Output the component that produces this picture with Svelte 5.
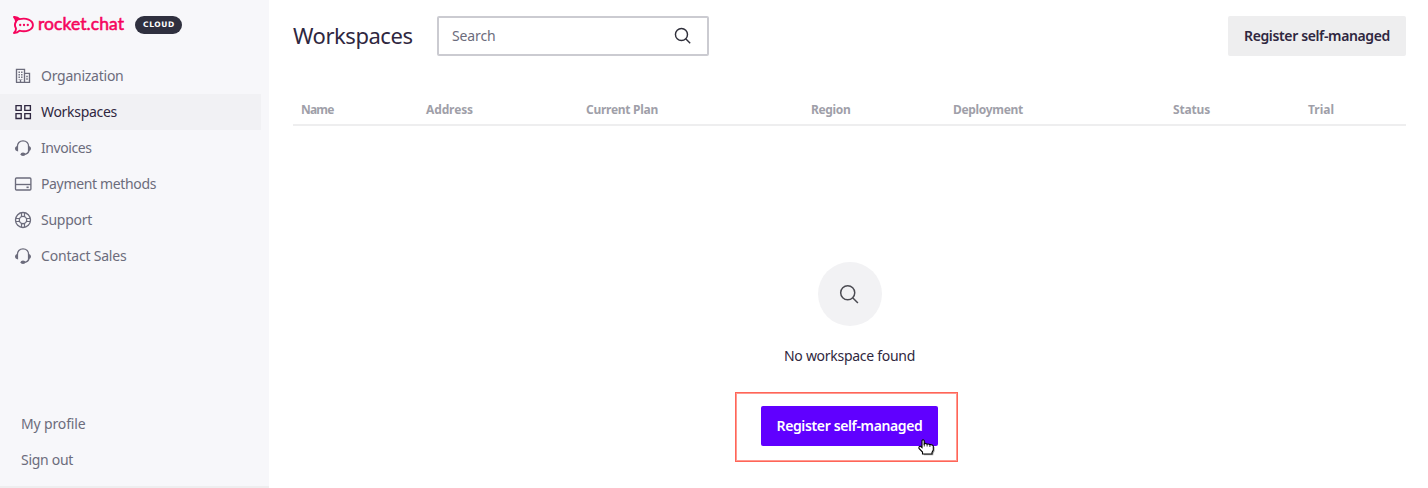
<script>
  const nav = [
    { label: 'Organization', icon: 'org', w: 82.5 },
    { label: 'Workspaces', icon: 'grid', w: 76, active: true },
    { label: 'Invoices', icon: 'headset', w: 50.5 },
    { label: 'Payment methods', icon: 'card', w: 115 },
    { label: 'Support', icon: 'buoy', w: 51 },
    { label: 'Contact Sales', icon: 'headset', w: 85.5 }
  ];
  const columns = [
    { label: 'Name', w: 32.5 },
    { label: 'Address', w: 47 },
    { label: 'Current Plan', w: 72 },
    { label: 'Region', w: 39.5 },
    { label: 'Deployment', w: 70 },
    { label: 'Status', w: 37 },
    { label: 'Trial', w: 26 }
  ];

  // Tracks a label so that it takes the given width in pixels.
  function fit(node, width) {
    const natural = node.getBoundingClientRect().width;
    node.style.letterSpacing = (width - natural) / node.textContent.length + 'px';
  }
</script>

{#snippet label(text, w)}<span class="label" use:fit={w}>{text}</span>{/snippet}

{#snippet magnifier(size, weight)}
  <svg width={size} height={size} viewBox="0 0 20 20" fill="none" stroke="currentColor" stroke-width={weight}>
    <circle cx="8.3" cy="8.3" r="6.7" /><path d="M13 13l5 5" />
  </svg>
{/snippet}

<div class="app">
  <aside>
    <div class="brand">
      <svg width="22" height="20" viewBox="0 0 22 20" fill="none" stroke="#f5055c" stroke-linejoin="round">
        <path stroke-width="1.9" d="M1 2C3.600 1.800 5.400 2.800 6.600 4.200C12.800 2.400 19.900 5 19.900 10S12.800 17.400 6.600 15.700C5.200 17.300 3.500 18 1 18C2.700 16.300 3.200 14.800 2.900 13.200C1.700 11.200 1.700 8.700 2.900 6.900C3.200 5.200 2.500 3.600 1 2Z" />
        <path fill="#f5055c" stroke="none" d="M1 2C4 1.800 5.400 2.800 6.600 4.200L3 7.500Z" />
        <g fill="#f5055c" stroke="none"><circle cx="7.200" cy="10" r="1.150" /><circle cx="11" cy="10" r="1.150" /><circle cx="14.800" cy="10" r="1.150" /></g>
      </svg>
      <div class="wordmark">{@render label('rocket.chat', 86)}</div>
      <div class="badge">{@render label('CLOUD', 32)}</div>
    </div>
    <nav>
      {#each nav as item}
        <a class:active={item.active}>
          <svg width="18" height="18" viewBox="0 0 18 18" fill="none" stroke="currentColor" stroke-width="1.35">
            {#if item.icon === 'org'}
              <path d="M2.500 15.400V2.300h8v13M10.500 6.400h5v9H2" />
              <path d="M5.200 4.500v8M7.800 4.500v8" stroke-width="1.400" stroke-dasharray="1.400 1.100" />
              <path d="M13 8.700v4.500" stroke-width="1.500" stroke-dasharray="1.500 1.100" />
              <path d="M6.500 15v-2.500" />
            {:else if item.icon === 'grid'}
              <path d="M2 2.600h5.200v4.800H2zM10.800 2.600h5.600v4.800h-5.600zM2 10.600h5.200v4.900H2zM10.800 10.600h5.600v4.900h-5.600z" />
            {:else if item.icon === 'headset'}
              <path d="M3.300 8C3.300 4.300 5.600 1.800 9 1.800s5.700 2.500 5.700 6.200M15 11.500c-.5 2.200-1.900 3.500-4.400 3.800" />
              <path fill="currentColor" stroke="none" d="M4.100 6.900v5.500C2.100 12.300 1 11.200 1 9.600s1.100-2.600 3.100-2.700zM13.900 6.900v5.500c2-.1 3.100-1.200 3.100-2.800s-1.100-2.600-3.100-2.700z" />
              <ellipse cx="9" cy="15.300" rx="2.400" ry="1.700" fill="currentColor" stroke="none" />
            {:else if item.icon === 'card'}
              <rect x="1.500" y="3" width="15.400" height="12" rx="1" /><path d="M1.500 9.500h15.400" />
              <path d="M12.500 12.300h2.200" stroke-width="1.600" />
            {:else}
              <circle cx="9" cy="9" r="7.500" /><circle cx="9" cy="9" r="3.700" />
              <path d="M7.500 1.800v3.900M10.500 1.800v3.900M7.500 12.300v3.900M10.500 12.300v3.900M1.800 7.500h3.900M1.800 10.500h3.900M12.300 7.500h3.900M12.300 10.500h3.900" stroke-width="1.200" />
            {/if}
          </svg>
          {@render label(item.label, item.w)}
        </a>
      {/each}
    </nav>
    <div class="account">
      <a>{@render label('My profile', 64.5)}</a>
      <a>{@render label('Sign out', 52)}</a>
    </div>
  </aside>

  <main>
    <header>
      <h1>{@render label('Workspaces', 119.5)}</h1>
      <div class="search">
        {@render label('Search', 43.5)}
        {@render magnifier(18, 1.6)}
      </div>
      <button class="secondary">{@render label('Register self-managed', 146)}</button>
    </header>
    <div class="columns">
      {#each columns as column}<div>{@render label(column.label, column.w)}</div>{/each}
    </div>
    <section>
      <div class="disc">{@render magnifier(21, 1.4)}</div>
      <p>{@render label('No workspace found', 131)}</p>
      <div class="highlight">
        <button class="primary">{@render label('Register self-managed', 146)}
          <svg class="pointer" width="19" height="18" viewBox="0 0 19 18">
            <path transform="translate(1.300 1.300)" opacity=".35" d="M4 1.500Q5 0 6.200 1.500V5Q8 4 9 5.200Q10.800 4.500 11.800 5.700Q14.500 5.300 15.300 7V11L14 13.500V15H4.500V13L1 9.500Q.5 7 2.500 7.300L4 8.500Z" />
            <path fill="#fff" stroke="#000" stroke-width="1.100" d="M4 1.500Q5 0 6.200 1.500V5Q8 4 9 5.200Q10.800 4.500 11.800 5.700Q14.500 5.300 15.300 7V11L14 13.500V15H4.500V13L1 9.500Q.5 7 2.500 7.300L4 8.500Z" />
            <path fill="none" stroke="#000" stroke-width=".8" d="M6.300 4.500V7.500M9.100 5.200V7.500M11.900 5.700V8" />
          </svg>
        </button>
      </div>
    </section>
  </main>
</div>

<style>
  :global(body) { margin: 0; background: #fff; }
  .app { display: flex; height: 488px; overflow: hidden; font: 14px/20px "Noto Sans", "Open Sans", sans-serif; color: #2f2740; }
  .label { white-space: nowrap; }
  svg { display: block; flex: none; }
  aside { box-sizing: border-box; width: 269px; flex: none; display: flex; flex-direction: column; background: #f7f7fa; color: #6c6c7c; border-bottom: 2px solid #eeeeef; }
  .brand { display: flex; align-items: center; height: 20px; padding: 15px 0 0 13px; }
  .wordmark { width: 85px; margin: -3px 0 0 3px; font: 400 17.5px/20px Lato, sans-serif; color: #f5055c; -webkit-text-stroke: .55px #f5055c; }
  .badge { box-sizing: border-box; width: 47px; height: 18px; margin-left: 12px; padding-left: 8px; border-radius: 9px; background: #2f303f; color: #fff; font: 700 7.5px/17px "DejaVu Sans", sans-serif; }
  nav { padding-top: 23px; width: 261px; }
  nav a { display: flex; align-items: center; gap: 9px; height: 36px; padding-left: 14px; }
  nav .active { background: #f1f1f4; color: #2f2740; }
  .account { margin-top: auto; padding: 0 0 8px 21px; }
  .account a { display: flex; align-items: center; height: 36px; }
  main { flex: 1; min-width: 0; padding: 16px 22px 0 24px; }
  header { display: flex; align-items: center; height: 40px; }
  h1 { width: 120px; margin: -2px 0 0; font: 400 22px/32px "Noto Sans", sans-serif; }
  .search { box-sizing: border-box; display: flex; align-items: center; justify-content: space-between; width: 272px; height: 40px; margin-left: 24px; padding: 0 15px 0 13px; border: 2px solid #cbcbd1; border-radius: 2px; color: #6c6c7c; }
  .search svg { color: #2f2f3a; }
  button { height: 40px; padding: 0 16px; border: 0; border-radius: 2px; font: 600 14px/20px "Noto Sans", sans-serif; white-space: nowrap; }
  .secondary { width: 178px; margin-left: auto; background: #eeeeef; color: #2f2740; }
  .columns { display: grid; grid-template-columns: 125px 160px 225px 142px 220px 135px 1fr; height: 30px; margin-top: 38px; border-bottom: 2px solid #eeeeef; font-size: 12px; line-height: 31px; font-weight: 700; color: #9f9fa9; }
  .columns div { padding-left: 8px; }
  section { display: flex; flex-direction: column; align-items: center; padding-top: 136px; }
  .disc { display: grid; place-items: center; width: 64px; height: 64px; border-radius: 50%; background: #f2f2f4; color: #4b4b52; }
  p { margin: 20px 0 26px; }
  .highlight { box-sizing: border-box; display: flex; justify-content: center; width: 223px; height: 70px; margin-left: -6px; padding: 12px 0 0 6px; border: 1.5px solid #ff6558; outline: .5px solid #ff9a91; outline-offset: -2px; }
  .highlight { padding-top: 13px; }
  .primary { position: relative; width: 177px; padding: 0 15px; background: #6000ff; color: #fff; }
  .pointer { position: absolute; left: 157px; top: 33px; }
</style>
